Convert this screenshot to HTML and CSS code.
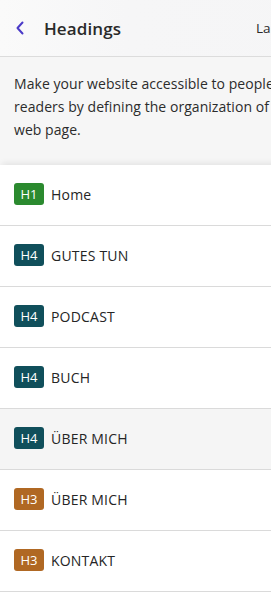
FILE: index.html
```html
<!DOCTYPE html>
<html>
<head>
<meta charset="utf-8">
<link rel="stylesheet" href="styles.css">
</head>
<body>
<div class="panel">
  <header class="top">
    <svg class="back" width="10" height="14" viewBox="0 0 10 14"><path d="M7.5 1.5 L2.5 7 L7.5 12.5" fill="none" stroke="#4a3ac8" stroke-width="2" stroke-linecap="round" stroke-linejoin="round"/></svg>
    <span class="title">Headings</span>
    <span class="lang">La</span>
  </header>
  <p class="desc">Make your website accessible to people using screen<br>readers by defining the organization of headings in your<br>web page.</p>
  <ul class="list">
    <li class="row"><span class="badge h1">H1</span><span class="label">Home</span></li>
    <li class="row"><span class="badge h4">H4</span><span class="label">GUTES TUN</span></li>
    <li class="row"><span class="badge h4">H4</span><span class="label">PODCAST</span></li>
    <li class="row"><span class="badge h4">H4</span><span class="label">BUCH</span></li>
    <li class="row active"><span class="badge h4">H4</span><span class="label">ÜBER MICH</span></li>
    <li class="row"><span class="badge h3">H3</span><span class="label">ÜBER MICH</span></li>
    <li class="row"><span class="badge h3">H3</span><span class="label">KONTAKT</span></li>
  </ul>
</div>
</body>
</html>
```
FILE: styles.css
```css
html, body {
  margin: 0;
  padding: 0;
  overflow: hidden;
  background: #ffffff;
}
body {
  width: 271px;
  height: 604px;
  font-family: "Open Sans", "Noto Sans", sans-serif;
  color: #262626;
}
.panel {
  width: 420px;
}
.top {
  height: 56px;
  display: flex;
  align-items: center;
  background: linear-gradient(90deg, #fafafa 0%, #f6f6f7 30%, #f5f5f6 100%);
  border-bottom: 1px solid #dcdcdc;
  padding-left: 15px;
}
.back {
  display: block;
  margin-right: 19px;
}
.title {
  font-size: 17px;
  font-weight: 600;
  color: #2a2a2a;
  letter-spacing: 0.1px;
}
.lang {
  margin-left: 135px;
  font-size: 13.5px;
  color: #2a2a2a;
}
.desc {
  margin: 0;
  background: #f6f6f6;
  padding: 15px 14px 23px 14px;
  font-size: 14px;
  line-height: 23px;
  color: #2c2c2c;
  height: 70px;
  white-space: nowrap;
  letter-spacing: 0.05px;
}
.list {
  list-style: none;
  margin: 0;
  padding: 0;
  background: #fff;
  box-shadow: 0 -4px 6px -2px rgba(0,0,0,0.08);
  position: relative;
}
.row {
  height: 60px;
  border-bottom: 1px solid #dadada;
  display: flex;
  align-items: center;
  padding-left: 14px;
}
.row.active {
  background: #f5f5f5;
}
.badge {
  width: 30px;
  height: 22px;
  border-radius: 3px;
  color: #fff;
  font-size: 13px;
  display: flex;
  align-items: center;
  justify-content: center;
  margin-right: 7px;
  margin-top: -2px;
}
.h1 { background: #2b8a2f; }
.h4 { background: #104f5b; }
.h3 { background: #b06823; }
.label {
  font-size: 14px;
  color: #252525;
  margin-top: -2px;
  letter-spacing: 0.2px;
}
```
